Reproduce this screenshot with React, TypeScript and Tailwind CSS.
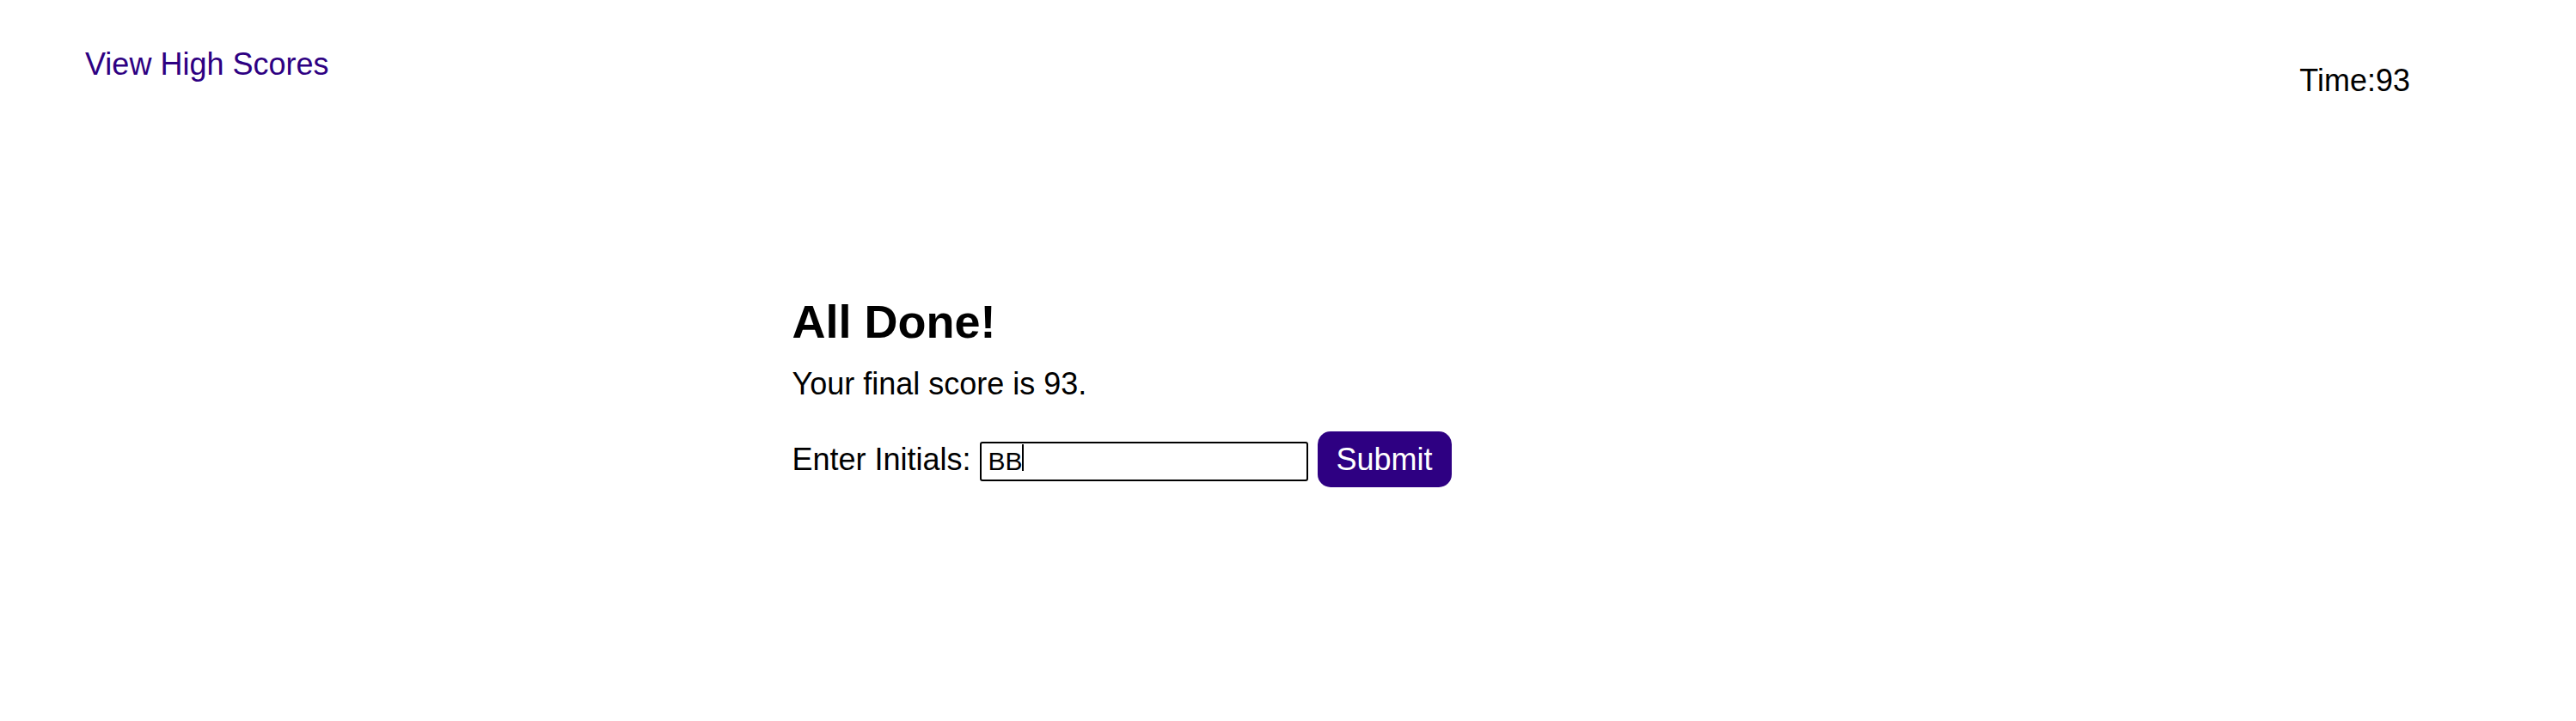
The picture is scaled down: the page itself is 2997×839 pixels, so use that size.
import React from "react";

export default function App() {
  return (
    <div className="min-h-screen bg-white text-black font-['Liberation_Sans',Arial,sans-serif] text-[36px]">
      <header className="flex items-start justify-between pl-[99px] pr-[193px] pt-[54px]">
        <a href="#" className="leading-[41px] text-[#2e0082] no-underline">
          View High Scores
        </a>
        <div className="mt-[19px] leading-[41px]">Time:93</div>
      </header>
      <main className="mx-auto mt-[229px] w-[1154px]">
        <h2 className="text-[54px] font-bold leading-[62px]">All Done!</h2>
        <p className="mt-[21px] leading-[41px]">Your final score is 93.</p>
        <div className="mt-[35px] flex items-center">
          <label className="leading-[41px]">Enter Initials:</label>
          <div className="relative ml-[10px]">
            <input
              type="text"
              readOnly
              value="BB"
              className="h-[46px] w-[382px] rounded-[3px] border-2 border-black px-[8px] text-[30px] leading-none outline-none caret-transparent"
            />
            <span className="absolute left-[49px] top-[9px] h-[31px] w-[2px] bg-black" />
          </div>
          <button className="ml-[11px] h-[65px] w-[156px] rounded-[15px] bg-[#2e0082] text-[36px] leading-none text-white">
            Submit
          </button>
        </div>
      </main>
    </div>
  );
}
